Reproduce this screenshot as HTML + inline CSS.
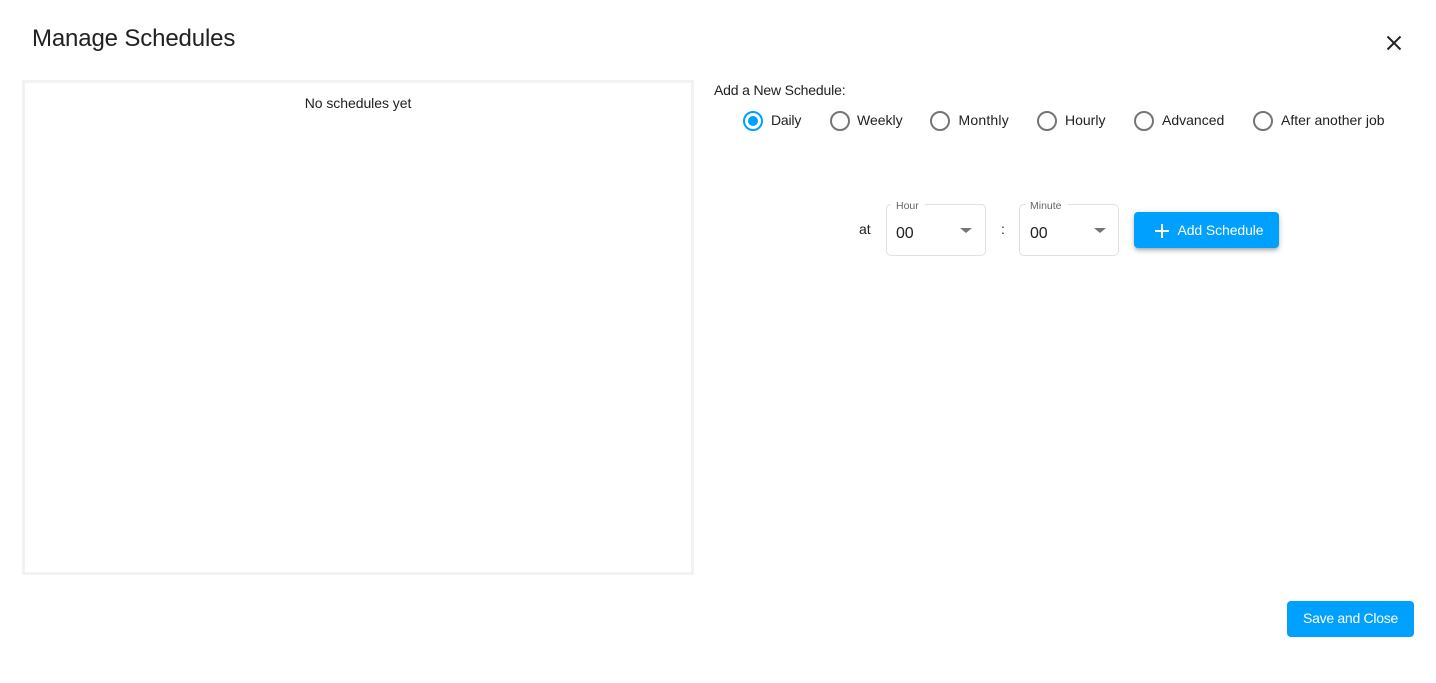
<!DOCTYPE html>
<html lang="en">
<head>
<meta charset="utf-8">
<title>Manage Schedules</title>
<style>
html,body{margin:0;padding:0;background:#fff;}
body{position:relative;width:1436px;height:683px;overflow:hidden;font-family:"Liberation Sans",sans-serif;color:#212121;}
.t{position:absolute;white-space:nowrap;font-size:14px;line-height:20px;}
.list{position:absolute;left:22px;top:80px;width:666px;height:489px;border:3px solid #f2f2f2;}
.radio{position:absolute;top:111px;width:20px;height:20px;box-sizing:border-box;border:2px solid #757575;border-radius:50%;}
.radio.on{border-color:#00a0ff;}
.radio.on:after{content:"";position:absolute;left:3px;top:3px;width:10px;height:10px;border-radius:50%;background:#00a0ff;}
.sel{position:absolute;top:204px;height:52px;box-sizing:border-box;border:1px solid #e0e0e0;border-radius:5px;}
.lab{position:absolute;top:200px;font-size:10.5px;line-height:12px;color:#666;background:#fff;padding:0 6px 0 5px;white-space:nowrap;}
.arr{position:absolute;top:228px;width:0;height:0;border-left:6px solid transparent;border-right:6px solid transparent;border-top:5px solid #757575;}
.btn{position:absolute;background:#00a0ff;color:#fff;border-radius:4px;}
</style>
</head>
<body>
<div class="t" style="left:32px;top:24px;font-size:24px;line-height:30px;letter-spacing:-.14px;">Manage Schedules</div>
<svg style="position:absolute;left:1384px;top:33px;" width="20" height="20" viewBox="0 0 20 20"><path d="M3.5 3.5L16.5 16.5M16.5 3.5L3.5 16.5" stroke="#212121" stroke-width="2" fill="none"/></svg>

<div class="list"></div>
<div class="t" style="left:22px;width:672px;text-align:center;top:93px;letter-spacing:-.05px;">No schedules yet</div>

<div class="t" style="left:714px;top:80px;letter-spacing:-.17px;">Add a New Schedule:</div>

<div class="radio on" style="left:743px;"></div>
<div class="t" style="left:771px;top:110px;letter-spacing:-.2px;">Daily</div>
<div class="radio" style="left:830px;"></div>
<div class="t" style="left:857px;top:110px;">Weekly</div>
<div class="radio" style="left:930px;"></div>
<div class="t" style="left:958.5px;top:110px;letter-spacing:.2px;">Monthly</div>
<div class="radio" style="left:1037px;"></div>
<div class="t" style="left:1065px;top:110px;">Hourly</div>
<div class="radio" style="left:1134px;"></div>
<div class="t" style="left:1162px;top:110px;">Advanced</div>
<div class="radio" style="left:1253px;"></div>
<div class="t" style="left:1281px;top:110px;">After another job</div>

<div class="t" style="left:859px;top:219px;">at</div>

<div class="sel" style="left:886px;width:100px;"></div>
<div class="lab" style="left:891px;">Hour</div>
<div class="t" style="left:896px;top:224px;font-size:16px;letter-spacing:-.2px;">00</div>
<div class="arr" style="left:960px;"></div>

<div class="t" style="left:1001px;top:219px;">:</div>

<div class="sel" style="left:1019px;width:100px;"></div>
<div class="lab" style="left:1025px;">Minute</div>
<div class="t" style="left:1030px;top:224px;font-size:16px;letter-spacing:-.2px;">00</div>
<div class="arr" style="left:1094px;"></div>

<div class="btn" style="left:1134px;top:212px;width:145px;height:36px;box-shadow:0 3px 3px -2px rgba(0,0,0,.2),0 3px 4px 0 rgba(0,0,0,.14),0 1px 8px 0 rgba(0,0,0,.12);"></div>
<svg style="position:absolute;left:1154px;top:223px;" width="16" height="16" viewBox="0 0 16 16"><path d="M8 1V15M1 8H15" stroke="#fff" stroke-width="2" fill="none"/></svg>
<div class="t" style="left:1177.5px;top:220px;color:#fff;letter-spacing:-.1px;">Add Schedule</div>

<div class="btn" style="left:1287px;top:601px;width:127px;height:36px;"></div>
<div class="t" style="left:1287px;width:127px;text-align:center;top:608px;color:#fff;letter-spacing:-.28px;">Save and Close</div>
</body>
</html>
